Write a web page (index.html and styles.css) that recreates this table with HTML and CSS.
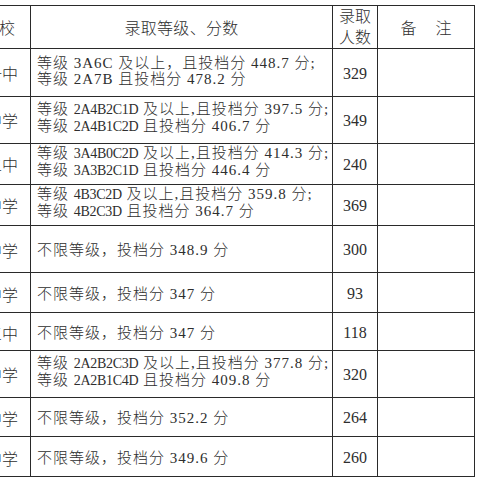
FILE: index.html
```html
<!DOCTYPE html>
<html lang="zh-CN">
<head>
<meta charset="utf-8">
<title>录取等级、分数</title>
<link rel="stylesheet" href="styles.css">
</head>
<body>
<div class="sheet">
<table class="score-table">
  <colgroup>
    <col class="c-school">
    <col class="c-rule">
    <col class="c-count">
    <col class="c-note">
  </colgroup>
  <thead>
    <tr class="h-head">
      <th class="school head-school">学校</th>
      <th class="rule-head">录取等级、分数</th>
      <th class="count-head">录取<br>人数</th>
      <th class="note-head">备<span class="gap"></span>注</th>
    </tr>
  </thead>
  <tbody>
    <tr class="h48">
      <td class="school">县一中</td>
      <td class="rule two">等级 3A6C 及以上，且投档分 448.7 分;<br>等级 2A7B 且投档分 478.2 分</td>
      <td class="count">329</td>
      <td class="note"></td>
    </tr>
    <tr class="h47">
      <td class="school">实验中学</td>
      <td class="rule two">等级 <span class="code">2A4B2C1D</span> 及以上,且投档分 397.5 分;<br>等级 <span class="code">2A4B1C2D</span> 且投档分 406.7 分</td>
      <td class="count">349</td>
      <td class="note"></td>
    </tr>
    <tr class="h41">
      <td class="school">县二中</td>
      <td class="rule two">等级 <span class="code">3A4B0C2D</span> 及以上,且投档分 414.3 分;<br>等级 <span class="code">3A3B2C1D</span> 且投档分 446.4 分</td>
      <td class="count">240</td>
      <td class="note"></td>
    </tr>
    <tr class="h41">
      <td class="school">育才中学</td>
      <td class="rule two">等级 <span class="code">4B3C2D</span> 及以上,且投档分 359.8 分;<br>等级 <span class="code">4B2C3D</span> 且投档分 364.7 分</td>
      <td class="count">369</td>
      <td class="note"></td>
    </tr>
    <tr class="h47 single">
      <td class="school">民族中学</td>
      <td class="rule">不限等级，投档分 348.9 分</td>
      <td class="count">300</td>
      <td class="note"></td>
    </tr>
    <tr class="h40 single">
      <td class="school">城关中学</td>
      <td class="rule">不限等级，投档分 347 分</td>
      <td class="count">93</td>
      <td class="note"></td>
    </tr>
    <tr class="h38 single">
      <td class="school">县三中</td>
      <td class="rule">不限等级，投档分 347 分</td>
      <td class="count">118</td>
      <td class="note"></td>
    </tr>
    <tr class="h47">
      <td class="school">文昌中学</td>
      <td class="rule two">等级 <span class="code">2A2B2C3D</span> 及以上,且投档分 377.8 分;<br>等级 <span class="code">2A2B1C4D</span> 且投档分 409.8 分</td>
      <td class="count">320</td>
      <td class="note"></td>
    </tr>
    <tr class="h39 single">
      <td class="school">崇文中学</td>
      <td class="rule">不限等级，投档分 352.2 分</td>
      <td class="count">264</td>
      <td class="note"></td>
    </tr>
    <tr class="h40 single">
      <td class="school">育英中学</td>
      <td class="rule">不限等级，投档分 349.6 分</td>
      <td class="count">260</td>
      <td class="note"></td>
    </tr>
  </tbody>
</table>
</div>
</body>
</html>
```

FILE: styles.css
```css
html, body {
  margin: 0;
  padding: 0;
  background: #ffffff;
  overflow: hidden;
}

.sheet {
  width: 480px;
  height: 480px;
  overflow: hidden;
  padding-top: 5px;
  box-sizing: border-box;
}

.score-table {
  border-collapse: collapse;
  table-layout: fixed;
  width: 544px;
  margin-left: -70px;
  font-family: "Liberation Serif", "Noto Sans CJK SC", serif;
  font-size: 15px;
  font-weight: 300;
  color: #2e2e2e;
}

.c-school { width: 100px; }
.c-rule { width: 302px; }
.c-count { width: 45px; }
.c-note { width: 97px; }

.score-table th,
.score-table td {
  border: 1px solid #2a2a2a;
  padding: 0;
  vertical-align: middle;
  white-space: nowrap;
  overflow: hidden;
  font-weight: 300;
}

.h-head { height: 43px; }
.h48 { height: 48px; }
.h47 { height: 47px; }
.h41 { height: 41px; }
.h40 { height: 40px; }
.h39 { height: 39px; }
.h38 { height: 38px; }

.school {
  text-align: right;
  padding-right: 12px !important;
  font-size: 16px;
}

.head-school {
  padding-right: 15px !important;
}

.rule-head {
  text-align: center;
  font-size: 16px;
  letter-spacing: 0.3px;
}

.count-head {
  text-align: center;
  font-size: 16px;
  line-height: 21px;
}

.note-head {
  text-align: center;
  font-size: 16px;
}

.gap {
  display: inline-block;
  width: 19px;
}

.rule {
  text-align: left;
  padding-left: 6px !important;
  line-height: 16px;
  letter-spacing: 1px;
}

.two {
  padding-bottom: 4px !important;
}

.single td {
  padding-top: 2px !important;
}

.code {
  font-size: 14px;
  letter-spacing: -0.3px;
}

.count {
  text-align: center;
  font-size: 16px;
  padding-top: 2px !important;
}

.note {
  text-align: center;
}
```
